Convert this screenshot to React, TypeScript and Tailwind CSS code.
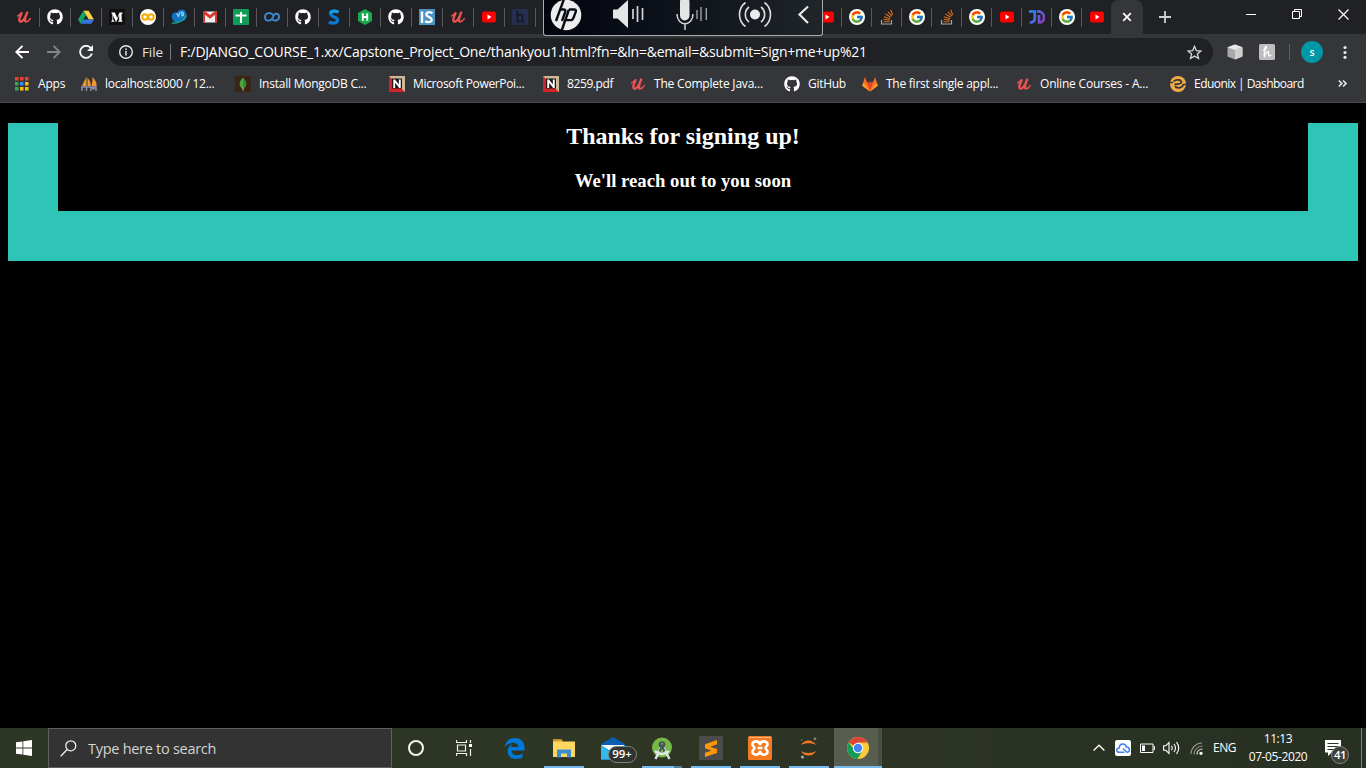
import type { ReactNode } from "react";
import { FaGithub } from "react-icons/fa";
import { FcGoogle } from "react-icons/fc";

type IconProps = { children: ReactNode; className?: string; box?: string };

function Svg({ children, className = "size-4", box = "0 0 16 16" }: IconProps) {
  return (
    <svg viewBox={box} className={`${className} shrink-0`} fill="none" aria-hidden="true">
      {children}
    </svg>
  );
}

const Udemy = () => (
  <Svg>
    <path d="M1.600 7Q4 5 5.500 4.200" stroke="#eb5252" strokeWidth="1.400" strokeLinecap="round" />
    <path d="M5.500 4.200C4 7.500 3 10 3.400 11.600C4.200 14 7.500 12 9.200 8.200L11.200 3.600C9.400 7.800 8.300 11.200 9.500 12.300" stroke="#eb5252" strokeWidth="2.400" strokeLinecap="round" strokeLinejoin="round" />
    <path d="M9.500 12.500C11 13.300 13 11.500 14.300 9.600" stroke="#eb5252" strokeWidth="1.500" strokeLinecap="round" />
  </Svg>
);
const Github = () => <FaGithub className="size-4 shrink-0 text-white" />;
const Drive = () => (
  <Svg>
    <path d="M5.400 1.700h5.200L16 10.600h-5.200z" fill="#ffcf48" />
    <path d="M5.400 1.700 8 6.100 2.700 14.800 0 10.400z" fill="#11a861" />
    <path d="M5.300 10.500H16l-2.600 4.300H2.700z" fill="#3777e3" />
  </Svg>
);
const Medium = () => (
  <Svg>
    <path d="M0 0h16v16H0z" fill="#12100e" />
    <path d="M2.500 3.500h3.300L8.200 9l2.300-5.500h3v1l-.9.600v6.300l.9.600v.8H9.200v-.8l1-.6V6L7.400 12.800h-.6L4.200 6.500v4.600l1.200 1.100v.6H2.300v-.6l1.100-1.100V5.300l-.9-.9z" fill="#fff" />
  </Svg>
);
const Colab = () => (
  <Svg>
    <circle cx="8" cy="8" r="8" fill="#fff" />
    <circle cx="5" cy="8" r="2.700" stroke="#f9ab00" strokeWidth="2" />
    <circle cx="11" cy="8" r="2.700" stroke="#f9ab00" strokeWidth="2" />
  </Svg>
);
const Bluebird = () => (
  <Svg>
    <path d="M1 9C0 5 3 2 6 4C7 0 14-1 15 4C17 9 13 13 9 12.500C5 15 2 13 1 9Z" fill="#1272bd" />
    <path d="M5.500 4l2 3.500L9 3M10.500 3.200a1.800 1.800 0 1 1 .5 3.600z" stroke="#8fd0f5" strokeWidth="1.200" />
    <path d="M.8 13.800C7 15 12.500 11.500 15.300 6.500" stroke="#14b58f" strokeWidth="1.300" />
  </Svg>
);
const Gmail = () => (
  <Svg>
    <path d="M1.500 2.500h13v11h-13z" fill="#eee" />
    <path d="M1 3.300V13.500h2V5.800l5 4 5-4v7.700h2V3.300c0-1.300-1.200-1.700-2.100-1L8 6.100 3.100 2.300C2.200 1.600 1 2 1 3.300Z" fill="#d6392c" />
  </Svg>
);
const Sheets = () => (
  <Svg>
    <rect width="16" height="16" rx="1" fill="#0f9d58" />
    <path d="M8 3v11M2.500 6.500h11" stroke="#fff" strokeWidth="2" />
  </Svg>
);
const Infinity = () => (
  <Svg>
    <path d="M9.300 6.300C7 2.800 1 3.300 1 8s6 5 8-.2C10.500 3.500 15 4 15 8s-5 4.700-7.300 1.700" stroke="#3e87cd" strokeWidth="1.900" />
  </Svg>
);
const BlueS = () => (
  <Svg>
    <path d="M12.500 3.300C10 1.500 4.700 1.500 4.700 4.800C4.700 8.300 11.600 7.500 11.600 11C11.600 14.500 6 14.800 3 12.800" stroke="#0878d0" strokeWidth="3.200" />
    <path d="M12.500 3.300C10 1.500 4.700 1.500 4.700 4.800" stroke="#129ddd" strokeWidth="3.200" />
  </Svg>
);
const HackerRank = () => (
  <Svg>
    <path d="M8 0l7 4v8l-7 4-7-4V4z" fill="#1ba94c" />
    <path d="M5.800 4.200v7.600M10.200 4.200v7.600M5.800 8h4.400" stroke="#fff" strokeWidth="1.900" />
  </Svg>
);
const InfoSys = () => (
  <Svg>
    <path d="M0 0h16v16H0z" fill="#4d94c4" />
    <path d="M3 2.500v11.500" stroke="#fff" strokeWidth="2.400" />
    <path d="M13.500 4.200C11.500 2.800 7.300 2.800 7.300 5.400C7.300 8.200 12.700 7.700 12.700 10.700C12.700 13.500 8.500 13.500 6 12.200" stroke="#fff" strokeWidth="2.200" />
  </Svg>
);
const Youtube = () => (
  <Svg>
    <rect x="1" y="2.500" width="14" height="11" rx="2.500" fill="#f00" />
    <path d="M6.500 5.500v5L10.500 8z" fill="#fff" />
  </Svg>
);
const HSquare = () => (
  <Svg>
    <rect width="16" height="16" rx="1" fill="#242f50" />
    <path d="M5.500 2.500v9M5.500 7q5-3 5 0v4.500" stroke="#17181f" strokeWidth="1.700" />
    <path d="M4 13h8.500M4 2.500h1.500M4 11.500h3M9 11.500h3" stroke="#17181f" strokeWidth="1" />
  </Svg>
);
const Google = () => (
  <div className="flex size-4 shrink-0 items-center justify-center rounded-full bg-white">
    <FcGoogle className="size-[14px]" />
  </div>
);
const Stack = () => (
  <Svg>
    <path d="M2.500 11v4h10v-4" stroke="#a7aaad" strokeWidth="1.200" />
    <path d="M4.400 12.800h6.200M4.600 10.300l6.200.8M5 7.700l6 2M6.500 5l5.200 3.300M8.900 2.800l4 4.300M11.700.8l2 5.200" stroke="#d96d1c" strokeWidth="1.100" />
  </Svg>
);
const JD = () => (
  <Svg>
    <defs>
      <linearGradient id="jd" x1="0" y1="0" x2="16" y2="10" gradientUnits="userSpaceOnUse">
        <stop stopColor="#159bff" />
        <stop offset="1" stopColor="#8a3cc0" />
      </linearGradient>
    </defs>
    <path d="M0 2.500h5.800v6.500c0 3-2 4.600-5 4.700M8 2.500C17 1.800 17 13.800 10 13.500V6" stroke="url(#jd)" strokeWidth="2.700" />
  </Svg>
);

const leftTabs = [Udemy, Github, Drive, Medium, Colab, Bluebird, Gmail, Sheets, Infinity, Github, BlueS, HackerRank, Github, InfoSys, Udemy, Youtube, HSquare];
const rightTabs = [Youtube, Google, Stack, Google, Stack, Google, Youtube, JD, Google, Youtube];

function TabStrip() {
  return (
    <div className="relative flex h-[34px] bg-[#202124] pl-[9px]">
      {leftTabs.map((Icon, i) => (
        <div key={i} className="mt-2 flex h-[19px] w-[31px] shrink-0 items-center justify-center border-r border-[#56585b] pb-px">
          <Icon />
        </div>
      ))}
      <div className="w-[276px] shrink-0" />
      {rightTabs.map((Icon, i) => (
        <div key={i} className="mt-2 flex h-[19px] w-[30px] shrink-0 items-center justify-center border-r border-[#56585b] pb-px">
          <Icon />
        </div>
      ))}
      <div className="z-10 -ml-px flex h-[34px] w-8 shrink-0 items-center justify-center rounded-t-lg bg-[#35363a]">
        <Svg className="size-[10px]" box="0 0 10 10">
          <path d="M1.200 1.200l7.600 7.600M8.800 1.200 1.200 8.800" stroke="#fff" strokeWidth="1.700" />
        </Svg>
      </div>
      <div className="flex w-11 shrink-0 items-center justify-center">
        <Svg className="size-3" box="0 0 12 12">
          <path d="M6 0v12M0 6h12" stroke="#d0d1d3" strokeWidth="1.800" />
        </Svg>
      </div>
      <div className="ml-auto flex h-7 items-center">
        <div className="flex w-[46px] justify-center">
          <Svg className="size-[10px]" box="0 0 10 10"><path d="M0 5.500h10" stroke="#fff" /></Svg>
        </div>
        <div className="flex w-[46px] justify-center">
          <Svg className="size-[10px]" box="0 0 10 10"><path d="M.5 2.500h7v7h-7zM2.500 2.500v-2h7v7h-2" stroke="#fff" /></Svg>
        </div>
        <div className="flex w-[46px] justify-center">
          <Svg className="size-[11px]" box="0 0 11 11"><path d="M.5.5l10 10M10.500.5l-10 10" stroke="#fff" strokeWidth="1.200" /></Svg>
        </div>
      </div>
      <SoundPanel />
    </div>
  );
}

function SoundPanel() {
  return (
    <div className="absolute top-0 left-[543px] z-20 h-9 w-[280px] overflow-hidden rounded-b-[3px] border border-t-0 border-[#a9abad] bg-gradient-to-r from-[#03050e] to-[#202529]">
      <svg viewBox="0 0 278 35" width="278" height="35" fill="none" aria-hidden="true">
        <circle cx="22" cy="15" r="15.300" fill="#ececee" />
        <path d="M20-1 12 21M16 9.500h3.500q2.500 0 1.700 2.300L18 21M25 9.500 17.500 31M25 9.500h5q2.500 0 1.700 2.300l-2.300 6.400q-.7 1.900-2.600 1.900h-4.500" stroke="#090c14" strokeWidth="2.400" />
        <path d="M69 9.500h4.500L84 0v28l-10.500-9.500H69z" fill="#e4e5e7" />
        <path d="M89 9v10M93.500 6v16M98.500 8v12" stroke="#d2d4d7" strokeWidth="1.700" />
        <rect x="136" y="-3" width="9.500" height="23.500" rx="4.700" fill="#e4e5e7" />
        <path d="M133 14c0 13 16 13 16 0M141 24v6" stroke="#d2d4d7" strokeWidth="1.500" />
        <path d="M153 10v9M157 7v14M162.300 8v12" stroke="#a9acb0" strokeWidth="1.300" />
        <circle cx="211" cy="14.500" r="5" fill="#e9eaec" />
        <path d="M205 7a9.500 9.500 0 0 0 0 15M217 7a9.500 9.500 0 0 1 0 15M201.500 2.500a15 15 0 0 0 0 24M220.500 2.500a15 15 0 0 1 0 24" stroke="#dcdde0" strokeWidth="1.600" />
        <path d="M264 6.500 255.500 14.500l8.500 8.500" stroke="#e6e7e9" strokeWidth="2.200" />
      </svg>
    </div>
  );
}

function Toolbar() {
  return (
    <div className="flex h-9 items-center bg-[#35363a]">
      <div className="flex w-[108px] items-center gap-[18px] pl-[15px]">
        <Svg className="size-[14px]" box="0 0 14 14">
          <path d="M14 7H1.500M7.500.8 1.300 7l6.200 6.200" stroke="#fff" strokeWidth="1.900" />
        </Svg>
        <Svg className="size-[14px]" box="0 0 14 14">
          <path d="M0 7h12.500M6.500.8 12.700 7l-6.200 6.200" stroke="#85868a" strokeWidth="1.900" />
        </Svg>
        <Svg className="size-[14px]" box="0 0 14 14">
          <path d="M12 3.300A6 6 0 1 0 12.900 8.500" stroke="#f1f3f4" strokeWidth="1.900" />
          <path d="M14 0v6H8z" fill="#f1f3f4" />
        </Svg>
      </div>
      <div className="flex h-7 w-[1105px] items-center rounded-full bg-[#202124] pl-[11px] text-white">
        <Svg className="size-[14px]" box="0 0 14 14">
          <circle cx="7" cy="7" r="6.300" stroke="#e8eaed" strokeWidth="1.400" />
          <path d="M7 6v4.500M7 3.500v1.400" stroke="#e8eaed" strokeWidth="1.500" />
        </Svg>
        <span className="ml-[9px] w-7 text-[13.500px] leading-7 tracking-[-0.100px] text-[#e0e1e3]">File</span>
        <span className="h-4 w-px bg-[#777a7d]" />
        <span className="ml-[9px] whitespace-nowrap text-[14px] leading-7 tracking-[-0.220px]">F:/DJANGO_COURSE_1.xx/Capstone_Project_One/thankyou1.html?fn=&amp;ln=&amp;email=&amp;submit=Sign+me+up%21</span>
        <Svg className="mr-[11px] ml-auto size-[15px]" box="0 0 15 15">
          <path d="M7.500 1.300l1.800 4.300 4.600.4-3.500 3 1.100 4.500-4-2.400-4 2.400 1.100-4.500-3.500-3 4.600-.4z" stroke="#d2d4d7" strokeWidth="1.300" />
        </Svg>
      </div>
      <div className="flex items-center pl-[14px]">
        <Svg>
          <path d="M8 .5l7.500 2.800v9.200L8 15.500.5 12.500V3.300z" fill="#a9a9a9" />
          <path d="M8 .5l7.500 2.800L8 6 .5 3.300z" fill="#e8e8e8" />
          <path d="M8 6l7.500-2.700v9.200L8 15.500z" fill="#cfcfcf" />
        </Svg>
        <Svg className="ml-4 size-4">
          <rect width="16" height="16" rx="1.500" fill="#bdbdbd" />
          <path d="M4 6C6 5.500 8 4 7.300 2.800S5 5 5.300 13C6.500 8 9.500 6 9.500 8.500S8.500 13 12.300 11" stroke="#fff" strokeWidth="1.400" />
        </Svg>
        <span className="ml-[14px] h-4 w-px bg-[#5d5e62]" />
        <span className="ml-[11px] flex size-[22px] items-center justify-center rounded-full bg-[#0097a7] text-[10.500px] leading-none font-semibold text-white">s</span>
        <Svg className="ml-[15px] size-[14px]" box="0 0 14 14">
          <circle cx="7" cy="2.500" r="1.600" fill="#e8eaed" />
          <circle cx="7" cy="7.500" r="1.600" fill="#e8eaed" />
          <circle cx="7" cy="12.300" r="1.600" fill="#e8eaed" />
        </Svg>
      </div>
    </div>
  );
}

const PhpMyAdmin = () => (
  <Svg>
    <path d="M5.500.5v9.500H1zM6.500 2q4 4 3 8h-3zM11.500 1q4.500 4.500 4 9h-5q1.500-5 1-9z" fill="#ef9a2d" />
    <path d="M0 11h15M1 15v-4M5.500 11v4M10 15v-4l2.500 2 2.500-2v4" stroke="#8d90b0" strokeWidth="1.400" />
  </Svg>
);
const Mongo = () => (
  <Svg>
    <path d="M0 0h16v16H0z" fill="#3a2415" />
    <path d="M8 1.500c-5 5-4 9 0 12z" fill="#4aa53f" />
    <path d="M8 1.500c5 5 4 9 0 12z" fill="#338a32" />
    <path d="M8 11v4" stroke="#a9a48d" />
  </Svg>
);
const Nitro = () => (
  <Svg>
    <path d="M0 0h16v16H0z" fill="#cdb89a" />
    <path d="M0 0v16h16z" fill="#d2222a" />
    <path d="M3 2.500h10v10H3z" fill="#1b1515" />
    <path d="M5.200 12V3.500M10.800 12V3.500M5.200 4.200l5.600 7" stroke="#fff" strokeWidth="1.900" />
  </Svg>
);
const Gitlab = () => (
  <Svg>
    <path d="M8 15.500.3 9.700 2.900 1l2.200 5.400h5.800L13.100 1l2.600 8.700z" fill="#fc6d26" />
    <path d="M8 15.500 5.100 6.400h5.800z" fill="#e24329" />
    <path d="M8 15.500.3 9.700l1-3.300zM8 15.500l7.700-5.800-1-3.300z" fill="#fca326" />
  </Svg>
);
const Eduonix = () => (
  <Svg>
    <circle cx="8" cy="8" r="8" fill="#f5ab45" />
    <path d="M0 6.500h3M3.500 5.500C6 3 11 3.500 11.500 6c0 2-4 2.300-7 2.300M16 8.500h-2.500c-1.500 4-7 4.500-8.500 1.500" stroke="#35363a" strokeWidth="1.700" />
  </Svg>
);

const bookmarks = [
  { Icon: PhpMyAdmin, text: "localhost:8000 / 12...", w: "w-[154px]", t: "tracking-[-0.240px]" },
  { Icon: Mongo, text: "Install MongoDB C...", w: "w-[154px]", t: "tracking-[-0.240px]" },
  { Icon: Nitro, text: "Microsoft PowerPoi...", w: "w-[154px]", t: "tracking-[-0.340px]" },
  { Icon: Nitro, text: "8259.pdf", w: "w-[87px]", t: "tracking-[-0.400px]" },
  { Icon: Udemy, text: "The Complete Java...", w: "w-[154px]", t: "tracking-[-0.200px]" },
  { Icon: Github, text: "GitHub", w: "w-[78px]", t: "tracking-[-0.300px]" },
  { Icon: Gitlab, text: "The first single appl...", w: "w-[154px]", t: "tracking-[-0.250px]" },
  { Icon: Udemy, text: "Online Courses - A...", w: "w-[154px]", t: "tracking-[-0.200px]" },
  { Icon: Eduonix, text: "Eduonix | Dashboard", w: "w-[154px]", t: "tracking-[-0.540px]" },
];

function Bookmarks() {
  return (
    <div className="flex h-[33px] items-center border-b border-[#4a4b4e] bg-[#35363a] pb-[5px] pl-[15px] text-[12px] text-white">
      <div className="flex w-[66px] items-center gap-[9px]">
        <Svg className="size-[14px]" box="0 0 14 14">
          <path d="M0 0h3.500v3.500H0zM5 0h3.500v3.500H5zM10 0h3.500v3.500H10z" fill="#ea4335" />
          <path d="M0 5h3.500v3.500H0zM0 10h3.500v3.500H0z" fill="#34a853" />
          <path d="M5 5h3.500v3.500H5z" fill="#4285f4" />
          <path d="M10 5h3.500v3.500H10zM5 10h3.500v3.500H5zM10 10h3.500v3.500H10z" fill="#fbbc05" />
        </Svg>
        <span className="tracking-[-0.200px]">Apps</span>
      </div>
      {bookmarks.map(({ Icon, text, w, t }) => (
        <div key={text} className={`${w} flex shrink-0 items-center gap-2`}>
          <Icon />
          <span className={`${t} whitespace-nowrap`}>{text}</span>
        </div>
      ))}
      <Svg className="ml-[14px] size-[9px]" box="0 0 9 9">
        <path d="M.8 1.500l3 3-3 3M5 1.500l3 3-3 3" stroke="#e8eaed" strokeWidth="1.600" />
      </Svg>
    </div>
  );
}

function Page() {
  return (
    <main className="flex-1 bg-black px-2 pt-5 text-center font-['Liberation_Serif',serif] font-bold text-white">
      <section className="h-[138px] border-x-[50px] border-b-[50px] border-[#2ec4b6]">
        <h2 className="text-[24px] leading-[27px]">Thanks for signing up!</h2>
        <h3 className="mt-5 text-[18.720px] leading-[21px]">We'll reach out to you soon</h3>
      </section>
    </main>
  );
}

type TaskProps = { children: ReactNode; open?: boolean };
function Task({ children, open = false }: TaskProps) {
  return (
    <div className="flex h-10 w-[49px] shrink-0 flex-col items-center">
      <div className="flex h-[38px] w-full items-center justify-center pt-[2px]">{children}</div>
      {open && <div className="h-[2px] w-10 bg-[#76b9ed]" />}
    </div>
  );
}

function Taskbar() {
  return (
    <footer className="flex h-10 shrink-0 bg-gradient-to-r from-[#2c3724] via-[#2e3525] to-[#273023] text-white">
      <div className="flex w-12 shrink-0 items-center justify-center">
        <Svg>
          <path d="M0 2.300l6.500-.9v6.200H0zM7.300 1.200 16 0v7.600H7.300zM0 8.400h6.500v6.200L0 13.700zM7.300 8.400H16V16l-8.700-1.200z" fill="#fff" />
        </Svg>
      </div>
      <div className="flex w-[344px] shrink-0 items-center border border-[#606060] bg-[#333] pl-[11px]">
        <Svg className="size-[17px]" box="0 0 17 17">
          <circle cx="10.800" cy="5.800" r="5" stroke="#eee" strokeWidth="1.300" />
          <path d="M7.200 9.500.7 16.200" stroke="#eee" strokeWidth="1.300" />
        </Svg>
        <span className="ml-[11px] pt-px text-[14.500px] tracking-[-0.280px] text-[#d4d4d4]">Type here to search</span>
      </div>
      <div className="flex w-12 shrink-0 items-center justify-center">
        <div className="size-4 rounded-full border-[2.500px] border-[#f2f2f2]" />
      </div>
      <div className="flex w-[50px] shrink-0 items-center pl-4">
        <Svg className="size-4">
          <path d="M.5 0v2.500h10V0M.5 16v-2.500h10V16M1.500 5h8v6h-8zM14.500 0v3M14.500 9v7" stroke="#f1f1f1" strokeWidth="1.200" />
          <path d="M13 4h3v3h-3z" fill="#fff" />
        </Svg>
      </div>
      <Task>
        <Svg className="size-[21px]" box="0 0 20 21">
          <path d="M0 9.500C1 3 5 0 10.500 0 17 0 20 4.500 20 9.500V12.500H7C7.300 17.500 13.500 18.500 18 15.500V19.500C12 22.500 3.500 21 3.200 13.500 3 10 5 7.300 8 5.800 7 7 6.600 8 6.500 9H13.500C13.700 3 5 3.200 0 9.500Z" fill="#0078d7" />
        </Svg>
      </Task>
      <Task open>
        <Svg className="h-[19px] w-[22px]" box="0 0 22 19">
          <path d="M0 .5h8.500l1.500 2h12V18H0z" fill="#ffd75e" />
          <path d="M0 .5h8.500l1.500 2H0z" fill="#d9971d" />
          <path d="M4 18.500v-8h14v8h-4v-4H8v4z" fill="#3c8ed3" />
        </Svg>
      </Task>
      <Task>
        <div className="relative h-[23px] w-6">
          <Svg className="h-[23px] w-6" box="0 0 24 23">
            <path d="M0 7 12 0l12 7v5H0z" fill="#0b5db0" />
            <path d="M1 8h22v10H1z" fill="#f2f7fa" />
            <path d="M0 8l12 7.500L24 8v14.500H0z" fill="#1ba4e2" />
            <path d="M0 8l17 14.500H0z" fill="#35b8ef" />
          </Svg>
          <span className="absolute top-[9px] left-[7px] flex h-[17px] w-[29px] items-center justify-center rounded-full border border-[#83867f] bg-[#30342e] text-[11.500px] leading-none font-semibold">99+</span>
        </div>
      </Task>
      <div className="flex h-10 w-[49px] shrink-0 flex-col items-center">
        <div className="flex h-[38px] w-full items-center justify-center pt-[2px]">
          <Svg className="size-[23px]" box="0 0 23 23">
            <circle cx="12" cy="10.500" r="10" fill="#76b947" />
            <path d="M11 10 5.500 22M13 10l6.500 12M5 14c4 4 10 4 14 0" stroke="#e3e7e8" strokeWidth="2.300" />
            <circle cx="12" cy="7.500" r="3.300" fill="#48545a" />
            <circle cx="12" cy="7" r="1.200" fill="#76b947" />
            <path d="M9.500 14.500 12 9l2.500 5.500" stroke="#48545a" strokeWidth="2" />
          </Svg>
        </div>
        <div className="flex h-[2px] w-10 bg-[#76b9ed]">
          <div className="ml-auto h-full w-2 bg-[#4f81a2]" />
        </div>
      </div>
      <Task open>
        <Svg className="size-6" box="0 0 24 24">
          <rect width="24" height="24" rx="1.500" fill="#4b4b4b" />
          <path d="M6 8.200 18 4v4.300l-7 2.400 7 2.200v4.200L6 21v-4.200l6.500-2.200L6 12.500z" fill="#ff9800" />
        </Svg>
      </Task>
      <Task open>
        <Svg className="size-6" box="0 0 24 24">
          <rect width="24" height="24" rx="1.500" fill="#f47a20" />
          <path d="M1 1.500h22" stroke="#ffb175" />
          <path d="M12 9.300C12 4 4 4.500 4.500 8.500c.2 2 2 2.200 2 3.500s-1.800 1.500-2 3.500C4 19.500 12 20 12 14.700 12 20 20 19.500 19.500 15.500c-.2-2-2-2.200-2-3.500s1.800-1.500 2-3.500C20 4.500 12 4 12 9.300ZM9.500 12h5" stroke="#fff" strokeWidth="2.600" />
        </Svg>
      </Task>
      <Task open>
        <Svg className="size-[22px]" box="0 0 22 22">
          <path d="M3 8C6 2 15 2 18 8 14.500 5.500 6.500 5.500 3 8ZM3 14c3 6 12 6 15 0-3.500 2.500-11.500 2.500-15 0Z" fill="#f37726" />
          <circle cx="17" cy="1.800" r="1.400" fill="#858585" />
          <circle cx="4.500" cy="20" r="1.600" fill="#a4a4a4" />
          <circle cx="3.500" cy="3" r=".8" fill="#777" />
        </Svg>
      </Task>
      <div className="ml-px flex h-10 w-12 shrink-0 flex-col border-r-4 border-[#4a5143] bg-[#575e50]">
        <div className="flex h-[38px] items-center justify-center pt-[2px] pl-1">
          <Svg className="size-[22px]" box="0 0 22 22">
            <circle cx="11" cy="11" r="11" fill="#fdc93b" />
            <path d="M11 11 1.500 5.500A11 11 0 0 1 20.500 5.500H11z" fill="#db4437" />
            <path d="M11 11H6L1.500 5.500A11 11 0 0 0 10.500 22L15.500 13.500z" fill="#109d58" />
            <circle cx="11" cy="11" r="5.200" fill="#fff" />
            <circle cx="11" cy="11" r="4.200" fill="#4285f4" />
          </Svg>
        </div>
        <div className="-mr-1 h-[2px] bg-[#76b9ed]" />
      </div>
      <div className="ml-auto flex items-center text-[12px]">
        <Svg className="size-[12px]" box="0 0 12 12"><path d="M.6 8.500 6 3.200l5.400 5.300" stroke="#fff" strokeWidth="1.300" /></Svg>
        <Svg className="ml-[10px] size-4">
          <rect width="16" height="16" rx="2" fill="#fff" />
          <path d="M9.500 12.300H4.300C.8 12.300 1 8 4.200 8 4.500 2.500 10.800 3 11.300 7c4 0 4 5.300.7 5.300L8 8.500" stroke="#3d83ef" strokeWidth="1.500" />
        </Svg>
        <Svg className="ml-[9px] h-3 w-[15px]" box="0 0 15 12">
          <path d="M.5 2h12.500v8.500H.5zM13.500 4.500h1v3h-1" stroke="#fff" />
          <path d="M2 3.500h3v5.500H2z" fill="#fff" />
        </Svg>
        <Svg className="ml-2 h-[14px] w-[17px]" box="0 0 17 14">
          <path d="M.6 4.800h2.200L6 1.500v11L2.800 9.300H.6zM8.500 4.800q1.500 2.200 0 4.400M11 3q3 4 0 8M13.500 1.200q4.500 5.800 0 11.600" stroke="#fff" strokeWidth="1.100" />
        </Svg>
        <Svg className="ml-[10px] size-[13px]" box="0 0 13 13">
          <path d="M1 12C1 6 6 1 12 1M4 12.500c0-5 4-8.500 8.500-8.500" stroke="#8f948b" strokeWidth="1.100" />
          <path d="M7 12.500C7 9 9.500 7 12.500 7" stroke="#e3e5e1" strokeWidth="1.200" />
          <circle cx="11" cy="11.300" r="1.600" fill="#fff" />
        </Svg>
        <span className="ml-[10px] w-[24px] tracking-[-0.500px]">ENG</span>
        <div className="ml-[11px] flex w-[60px] flex-col items-center leading-[18px] whitespace-nowrap tracking-[-0.400px]">
          <span>11:13</span>
          <span>07-05-2020</span>
        </div>
        <div className="relative ml-[17px] h-4 w-4">
          <Svg>
            <path d="M0 0h16v12.500H6.500L3 16v-3.500H0z" fill="#fff" />
            <path d="M2.500 3.500h11M2.500 6.500h11M2.500 9.500h8" stroke="#2b3326" />
          </Svg>
          <span className="absolute top-[6px] left-[6px] flex size-[18px] items-center justify-center rounded-full border border-[#83867f] bg-[#3c403b] text-[11.500px] leading-none font-semibold tracking-[-0.500px]">41</span>
        </div>
        <div className="ml-5 h-10 w-px bg-[#7c8276]" />
        <div className="w-1" />
      </div>
    </footer>
  );
}

export default function App() {
  return (
    <div className="flex h-screen w-screen flex-col overflow-hidden bg-black font-['Open_Sans','Noto_Sans',sans-serif]">
      <header className="shrink-0">
        <TabStrip />
        <Toolbar />
        <Bookmarks />
      </header>
      <Page />
      <Taskbar />
    </div>
  );
}
